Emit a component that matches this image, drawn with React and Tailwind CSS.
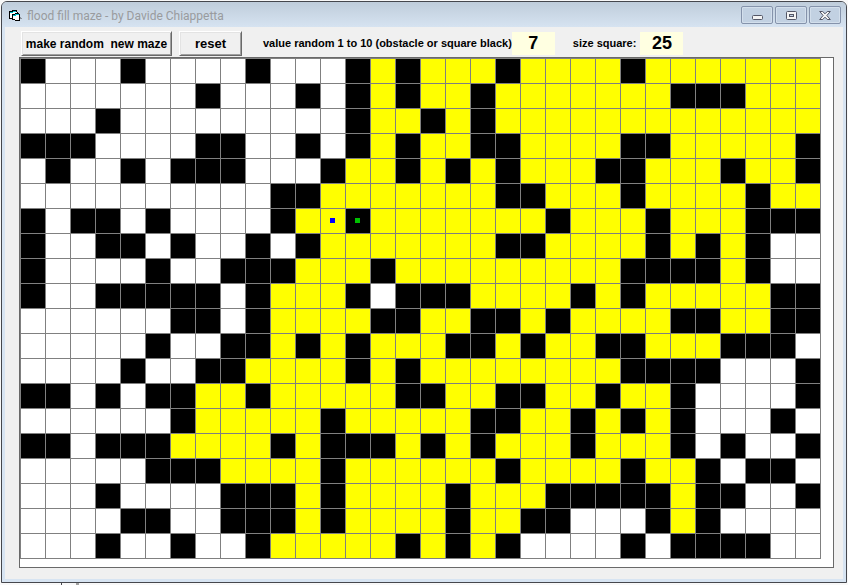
import React from "react";

// "#" is an obstacle, "y" a flooded square, "." an empty square
const MAZE = [
  "#...#....#...#y#yyy#yyyy#yyyyyyy",
  ".......#...#.#y#yy#yyyyyyy###yyy",
  "...#.........#yy#y#yyyyyyyyyyyyy",
  "###....##..#.#y#yy##yyyy##yyyyy#",
  ".#..#.###...#yy#y#y#yyy##yyy#yy#",
  "..........##yyyyyyy##yyy#yyyy#yy",
  "#.##.#....#yy#yyyyyyy#yyy#yyy###",
  "#..##.#..#.#yyyyyyy##yyyy#y#y#..",
  "#....#..###yyy#yyyyyyyyy####y#..",
  "#..#####.#yyy#.###yyyy#y#yyyyy##",
  "......##.#yyyy##yy##y#yyyy##yy##",
  ".....#..##y#y#yyy##y#yy##yyy###.",
  "....#..##yyyy#y#yyyyyyyy####...#",
  "##.#.##yy#yyyyy##yy##yy#yy#....#",
  "......#yyyyy#yyyyy##yy#y#y#...#.",
  "##.###yyyy#y###y#y#yyy#yyy#.#..#",
  ".....###yyyy#yyyyyy#yyyy#yy#.##.",
  "...#....###y#yyyy#yyy#####y##..#",
  "....##..###y#yyyy#yy##...#y#....",
  "...#..#..#yyyyy#y#y#....#.####..",
];

const FILL = { "#": "bg-black", y: "bg-[#ffff00]", ".": "bg-white" };
const MARKERS = { "6-12": "bg-[#0000ff]", "6-13": "bg-[#00c000]" };

function FormIcon() {
  return (
    <svg width="14" height="12" viewBox="0 0 14 12" shapeRendering="crispEdges" aria-hidden="true">
      <path d="M0 1h3v-1h5v2h1v7h-9z" fill="#000" />
      <path d="M1 2h7v6h-7z" fill="#fff" />
      <path d="M1 2h3v-1h3v1h-3v1h-3z" fill="#00c4d0" />
      <path d="M3 4h3v-1h4v1h1v7h-5v-1h-3z" fill="#000" />
      <path d="M4 5h6v5h-4v-1h-2z" fill="#fff" />
      <path d="M4 5h2v-1h4v1h-3v1h-3z" fill="#00c4d0" />
      <path d="M11 7h1v1h-1zM11 8h2v1h-2z" fill="#888f98" />
    </svg>
  );
}

function CaptionButton({ label, children }) {
  return (
    <button
      type="button"
      aria-label={label}
      className="flex h-[18px] w-8 items-center justify-center rounded-[2px] border border-[#8593ab] bg-[#c2d1e2] shadow-[inset_0_0_0_1px_#d3dfec]"
    >
      {children}
    </button>
  );
}

function TitleBar() {
  return (
    <header className="flex h-[25px] items-start justify-between bg-linear-to-b from-[#bfcddb] to-[#d6e3f1] pr-[5px] pl-[7px]">
      <div className="flex items-center gap-1 pt-[5px]">
        <FormIcon />
        <h1 className="font-[Roboto,'Open_Sans',sans-serif] text-[12px] leading-[18px] text-[#999b9e]">
          flood fill maze - by Davide Chiappetta
        </h1>
      </div>
      <div className="flex gap-[2px] pt-1">
        <CaptionButton label="Minimize">
          <svg width="11" height="11" viewBox="0 0 11 11" aria-hidden="true">
            <rect x=".5" y="5.5" width="10" height="4" rx="1" fill="#f4f4f4" stroke="#535666" />
          </svg>
        </CaptionButton>
        <CaptionButton label="Maximize">
          <svg width="11" height="9" viewBox="0 0 11 9" aria-hidden="true">
            <rect x=".5" y=".5" width="10" height="8" rx="1" fill="#f4f4f4" stroke="#535666" />
            <rect x="3.5" y="3.5" width="4" height="2" fill="#c2d1e2" stroke="#535666" />
          </svg>
        </CaptionButton>
        <CaptionButton label="Close">
          <svg width="12" height="9" viewBox="0 0 12 9" aria-hidden="true">
            <path
              d="M.7.5h3L6 2.800 8.300.5h3L7.900 4.500l3.400 4h-3L6 6.200 3.700 8.500h-3l3.400-4z"
              fill="#f4f4f4"
              stroke="#535666"
              strokeLinejoin="round"
            />
          </svg>
        </CaptionButton>
      </div>
    </header>
  );
}

function PushButton({ children, className }) {
  return (
    <button
      type="button"
      className={
        "h-[25px] border border-t-white border-l-white border-r-[#696969] border-b-[#696969] bg-[#f0f0f0] leading-4 font-bold whitespace-pre text-black shadow-[inset_1px_1px_0_#e3e3e3,inset_-1px_-1px_0_#a0a0a0] " +
        className
      }
    >
      {children}
    </button>
  );
}

function NumberField({ id, label, value, className }) {
  return (
    <div className={"flex items-center " + className}>
      <label htmlFor={id} className="text-[11px] leading-6 font-bold whitespace-nowrap">
        {label}
      </label>
      <input
        id={id}
        type="text"
        defaultValue={value}
        className="h-[23px] w-[43px] bg-[#ffffe1] text-center text-[18px] leading-6 font-bold outline-none"
      />
    </div>
  );
}

function Maze() {
  return (
    <div className="flex-1 border border-[#696969] bg-white">
      <div className="grid w-max grid-cols-[repeat(32,25px)] border-t border-l border-[#808080]">
        {MAZE.flatMap((row, r) =>
          [...row].map((cell, c) => {
            const marker = MARKERS[r + "-" + c];
            return (
              <div key={r + "-" + c} className={"h-[25px] border-r border-b border-[#808080] p-[9px] " + FILL[cell]}>
                {marker && <div className={"size-[5px] " + marker} />}
              </div>
            );
          })
        )}
      </div>
    </div>
  );
}

export default function App() {
  return (
    <div className="flex min-h-screen flex-col bg-[#f8f8f8] px-px pt-px font-['Liberation_Sans',Arial,sans-serif] text-black">
      <main className="flex flex-1 flex-col overflow-hidden rounded-t-[6px] border border-[#45474d] bg-[#d7e4f2]">
        <TitleBar />
        <div className="mx-[3px] mb-[3px] flex flex-1 flex-col bg-[#f0f0f0] pr-[9px] pb-[11px] pl-[14px]">
          <div className="flex items-start pt-1 pl-[2px]">
            <PushButton className="w-[151px] text-[12px]">{"make random  new maze"}</PushButton>
            <PushButton className="ml-[7px] w-[63px] text-[13px]">reset</PushButton>
            <NumberField
              id="obstacles"
              label="value random 1 to 10 (obstacle or square black)"
              value="7"
              className="ml-[21px]"
            />
            <NumberField id="size" label="size square:" value="25" className="ml-[18px] gap-1" />
          </div>
          <div className="mt-px flex flex-1">
            <Maze />
          </div>
        </div>
      </main>
      <div className="flex h-[2px] gap-[14px] pl-[60px]">
        <div className="w-px bg-[#45474d]" />
        <div className="w-[3px] bg-[#a0a0a0]" />
      </div>
    </div>
  );
}
